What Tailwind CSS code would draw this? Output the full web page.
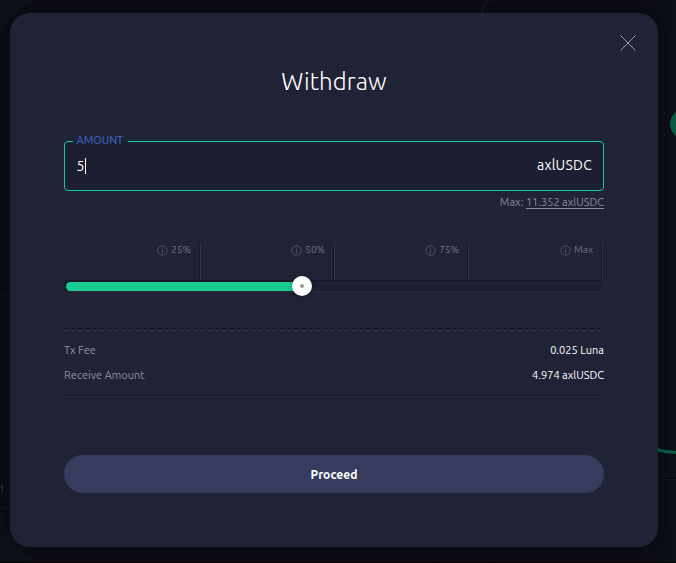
<!DOCTYPE html>
<html lang="en">
<head>
<meta charset="utf-8">
<title>Withdraw</title>
<script src="https://cdn.jsdelivr.net/npm/@tailwindcss/browser@4"></script>
</head>
<body class="relative h-[563px] w-[676px] overflow-hidden bg-[#0c0d15] font-['Ubuntu','Noto_Sans',sans-serif] text-white">
<svg class="absolute inset-0" width="676" height="563" viewBox="0 0 676 563" fill="none">
  <defs>
    <linearGradient id="edge" x1="0" x2="1"><stop offset="0" stop-color="#0c0d15"/><stop offset="1" stop-color="#0c1118"/></linearGradient>
  </defs>
  <rect x="658" width="18" height="563" fill="url(#edge)"/>
  <path d="M0 0h30L0 30zM0 510v53h30z" fill="#0c1118"/>
  <path d="M0 259.500h12M0 465.500h12M656 478.500h20" stroke="#06070c"/>
  <path d="M0 294.500h12M0 508.500h12M656 479.500h20" stroke="#14151d"/>
  <path d="M440 0q5 5 6 13" stroke="#11121a"/><path d="M482 13q0-8 7-13" stroke="#1e1f28"/>
  <path d="M447 547q-3 11-13 15M481 547q3 11 13 15" stroke="#11121a"/>
  <rect x="670" y="109" width="60" height="30" rx="15" fill="#0b5c45"/>
  <path d="M656 449.500q10 3 20 3" stroke="#0b6249" stroke-width="3"/>
  <path d="M0 562.500h676" stroke="#09040c"/>
</svg>
<span class="absolute -left-[4px] top-[481px] text-[11px] leading-[15px] text-[#34353e]">H</span>

<main class="relative ml-[10px] mt-[13px] flex h-[534px] w-[648px] flex-col rounded-[20px] bg-[#202236] px-[54px] shadow-[0_0_20px_4px_rgba(0,0,0,0.25)]">
  <button class="absolute left-[610px] top-[22px] size-4" aria-label="Close">
    <svg width="16" height="16" viewBox="0 0 16 16" stroke="#989aa5" stroke-width="1"><path d="M.5.500l15 15M15.500.500l-15 15"/></svg>
  </button>
  <h1 class="mt-[51px] h-9 text-center text-[24px] font-light leading-[36px] tracking-[0.120px]">Withdraw</h1>

  <section class="relative mt-[41px] flex h-[50px] items-center justify-between rounded-[4px] border border-[#15cc93] bg-[#1c1e31] pr-[11px] pl-3 text-[14px]">
    <span class="absolute -top-[10px] left-[8px] h-[17px] bg-linear-to-b from-[#202236] from-60% to-[#1c1e31] to-60% px-[3.500px] pr-[5px] text-[11px] leading-[16px] text-[#3d6dcd]">AMOUNT</span>
    <span class="flex items-center"><span class="-ml-[0.500px] mr-[0.500px]">5</span><i class="block h-4 w-px bg-white"></i></span>
    <span class="relative -top-px tracking-[0.250px]">axlUSDC</span>
  </section>
  <p class="mt-[3px] h-4 text-right text-[11px] leading-4 text-[#8b8c98]">Max: <span class="underline underline-offset-2">11.352 axlUSDC</span></p>

  <section class="mt-[33px] h-[50px]">
    <div class="grid h-[37px] w-[539px] grid-cols-[137px_134px_134px_134px] text-[10px] leading-[14px] text-[#747584]">
      <div class="flex items-start justify-end gap-[3px] border-r border-[#2e3150] pr-[9px] shadow-[inset_-1px_0_#15172a]"><svg class="mt-[2px]" width="11" height="11" viewBox="0 0 11 11" fill="none" stroke="#555766"><circle cx="5.500" cy="5.500" r="4.700"/><path d="M5.500 4.800v3.400M5.500 2.700v1"/></svg>25%</div>
      <div class="flex items-start justify-end gap-[3px] border-r border-[#2e3150] pr-[9px] shadow-[inset_-1px_0_#15172a]"><svg class="mt-[2px]" width="11" height="11" viewBox="0 0 11 11" fill="none" stroke="#555766"><circle cx="5.500" cy="5.500" r="4.700"/><path d="M5.500 4.800v3.400M5.500 2.700v1"/></svg>50%</div>
      <div class="flex items-start justify-end gap-[3px] border-r border-[#2e3150] pr-[9px] shadow-[inset_-1px_0_#15172a]"><svg class="mt-[2px]" width="11" height="11" viewBox="0 0 11 11" fill="none" stroke="#555766"><circle cx="5.500" cy="5.500" r="4.700"/><path d="M5.500 4.800v3.400M5.500 2.700v1"/></svg>75%</div>
      <div class="flex items-start justify-end gap-[3px] border-r border-[#2e3150] pr-[9px] shadow-[inset_-1px_0_#15172a]"><svg class="mt-[2px]" width="11" height="11" viewBox="0 0 11 11" fill="none" stroke="#555766"><circle cx="5.500" cy="5.500" r="4.700"/><path d="M5.500 4.800v3.400M5.500 2.700v1"/></svg>Max</div>
    </div>
    <div class="relative h-3 rounded-[5px] border border-t-[#14162a] border-r-[#2a2c40] border-b-[#2a2c40] border-l-[#171929] bg-[#1c1e31]">
      <div class="ml-px mt-px h-[9px] w-[237px] rounded-[5px] bg-[#18cc92]"></div>
      <div class="absolute -top-[5px] left-[227px] flex size-5 items-center justify-center rounded-full bg-white shadow-[0_1px_4px_rgba(0,0,0,0.35)]"><i class="size-1 rounded-full bg-[#999]"></i></div>
    </div>
  </section>

  <section class="mt-[35px] text-[11px]">
    <svg class="block" width="540" height="3" viewBox="0 0 540 3"><path d="M0 .500h538" stroke="#10121d" stroke-dasharray="4 3.200"/><path d="M0 2.500h538" stroke="#303350" stroke-dasharray="4 3.200"/></svg>
    <dl class="mt-[7px] h-[57px]">
      <div class="flex h-[25px] items-center justify-between"><dt class="text-[#90919d]">Tx Fee</dt><dd>0.025 Luna</dd></div>
      <div class="flex h-[25px] items-center justify-between"><dt class="text-[#90919d]">Receive Amount</dt><dd>4.974 axlUSDC</dd></div>
    </dl>
    <svg class="block" width="540" height="3" viewBox="0 0 540 3"><path d="M0 .500h538" stroke="#10121d" stroke-dasharray="4 3.200"/><path d="M0 1.500h538" stroke="#2b2d43" stroke-dasharray="4 3.200"/></svg>
  </section>
  <button class="mt-[57px] h-[38px] rounded-full bg-[#373c5f] pt-[2px] text-[12px] font-bold tracking-[0.100px]">Proceed</button>
</main>
</body>
</html>
